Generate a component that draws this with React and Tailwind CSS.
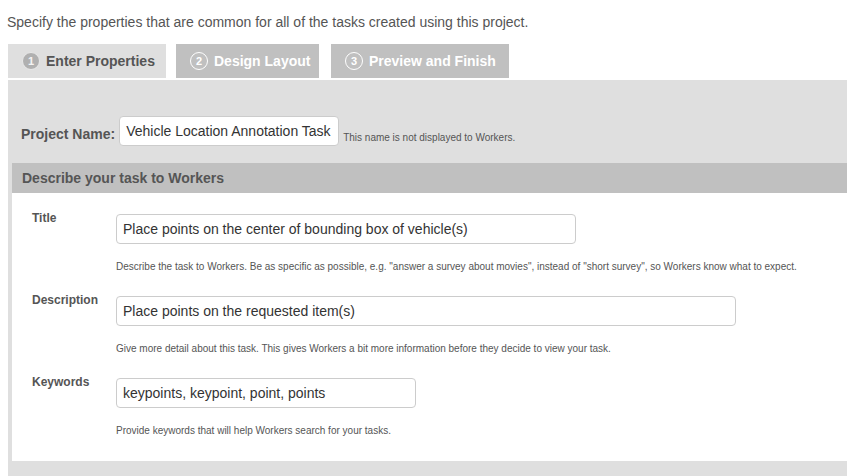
const tabs = [
  { n: 1, label: 'Enter Properties', active: true, width: 'w-[158px]' },
  { n: 2, label: 'Design Layout', width: 'w-[143px]' },
  { n: 3, label: 'Preview and Finish', width: 'w-[178px]' },
];

const fields = [
  {
    label: 'Title',
    value: 'Place points on the center of bounding box of vehicle(s)',
    width: 'w-[460px]',
    help: 'Describe the task to Workers. Be as specific as possible, e.g. "answer a survey about movies", instead of "short survey", so Workers know what to expect.',
  },
  {
    label: 'Description',
    value: 'Place points on the requested item(s)',
    width: 'w-[620px]',
    help: 'Give more detail about this task. This gives Workers a bit more information before they decide to view your task.',
  },
  {
    label: 'Keywords',
    value: 'keypoints, keypoint, point, points',
    width: 'w-[300px]',
    help: 'Provide keywords that will help Workers search for your tasks.',
  },
];

const Tab = ({ n, label, active, width }) => (
  <div
    className={
      'flex h-[34px] items-center gap-[6px] pl-[14px] text-[14px] font-bold ' +
      width +
      ' ' +
      (active ? 'bg-[#dfdfdf] text-[#555]' : 'bg-[#c0c0c0] text-white')
    }
  >
    <span
      className={
        'flex h-[18px] w-[18px] items-center justify-center rounded-full text-[11px] leading-none ' +
        (active ? 'border border-[#e8e8e8] bg-[#b0b0b0] text-[#f4f4f4]' : 'border border-white text-white')
      }
    >
      {n}
    </span>
    {label}
  </div>
);

const App = () => {
  return (
    <div className="h-[476px] w-[847px] overflow-hidden bg-white pl-[8px] font-['Liberation_Sans',Arial,sans-serif] text-[#555]">
      <p className="-ml-[1px] pt-[12px] text-[14px] leading-[20px]">
        Specify the properties that are common for all of the tasks created using this project.
      </p>

      <div className="mt-[12px] flex">
        <Tab {...tabs[0]} />
        <div className="ml-[10px]">
          <Tab {...tabs[1]} />
        </div>
        <div className="ml-[12px]">
          <Tab {...tabs[2]} />
        </div>
      </div>

      <div className="mt-[2px] bg-[#dfdfdf] pl-[4px] pt-[36px] pb-[20px]">
        <div className="flex items-end pl-[9px]">
          <span className="mb-[3px] text-[14px] font-bold leading-[18px]">Project Name:</span>
          <div className="ml-[4px] flex h-[30px] w-[220px] items-center rounded-[4px] border border-[#ccc] bg-white pl-[6px] text-[14px] text-[#333]">
            Vehicle Location Annotation Task
          </div>
          <span className="mb-[2px] ml-[4px] text-[10px] leading-[12px]">This name is not displayed to Workers.</span>
        </div>

        <div className="mt-[17px] flex h-[30px] items-center bg-[#c0c0c0] pl-[10px] text-[14px] font-bold">
          Describe your task to Workers
        </div>

        <div className="bg-white pl-[20px] pt-[17px] pb-[24px]">
          {fields.map((f, i) => (
            <div key={f.label} className={'flex items-start ' + (i > 0 ? 'mt-[19px]' : '')}>
              <span className="w-[84px] text-[12px] font-bold leading-[16px]">{f.label}</span>
              <div className="pt-[4px]">
                <div
                  className={
                    'flex h-[30px] items-center rounded-[4px] border border-[#ccc] bg-white pl-[6px] text-[14px] text-[#333] ' +
                    f.width
                  }
                >
                  {f.value}
                </div>
                <p className="mt-[17px] text-[10px] leading-[12px]">{f.help}</p>
              </div>
            </div>
          ))}
        </div>
      </div>
    </div>
  );
};

export default App;
